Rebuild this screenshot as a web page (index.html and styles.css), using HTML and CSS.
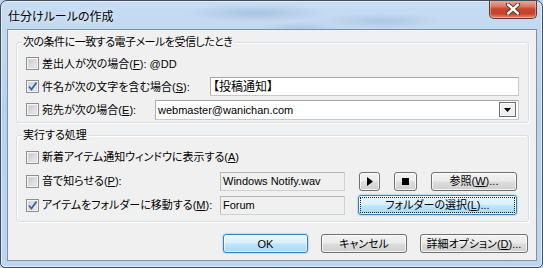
FILE: index.html
```html
<!DOCTYPE html>
<html lang="ja">
<head>
<meta charset="utf-8">
<title>仕分けルールの作成</title>
<link rel="stylesheet" href="styles.css">
</head>
<body>
<div class="window">
  <div class="titlebar">
    <span class="title">仕分けルールの作成</span>
    <div class="close">
      <svg width="16" height="12" viewBox="0 0 16 12">
        <path d="M3 1.5 L13 10.5 M13 1.5 L3 10.5" stroke="#4a2a24" stroke-width="4.2" stroke-linecap="round"/>
        <path d="M3 1.5 L13 10.5 M13 1.5 L3 10.5" stroke="#ffffff" stroke-width="2.4" stroke-linecap="round"/>
      </svg>
    </div>
  </div>
  <div class="client">
    <fieldset class="group g1">
      <legend class="tight">次の条件に一致する電子メールを受信したとき</legend>
      <div class="row">
        <span class="cb"></span>
        <span class="lbl">差出人が次の場合(<u>F</u>): @DD</span>
      </div>
      <div class="row">
        <span class="cb checked"><svg width="11" height="11" viewBox="0 0 11 11"><path d="M2 5.5 L4.5 8.5 L9.5 1.5" fill="none" stroke="#3a62a8" stroke-width="1.9"/></svg></span>
        <span class="lbl w-subject">件名が次の文字を含む場合(<u>S</u>):</span>
        <div class="field grow">【投稿通知】</div>
      </div>
      <div class="row">
        <span class="cb"></span>
        <span class="lbl w-to">宛先が次の場合(<u>E</u>):</span>
        <div class="field grow combo">
          <span>webmaster@wanichan.com</span>
          <span class="dd"><svg width="7" height="4" viewBox="0 0 7 4"><path d="M0 0 H7 L3.5 4 Z" fill="#000"/></svg></span>
        </div>
      </div>
    </fieldset>
    <fieldset class="group g2">
      <legend>実行する処理</legend>
      <div class="row">
        <span class="cb"></span>
        <span class="lbl">新着アイテム通知ウィンドウに表示する(<u>A</u>)</span>
      </div>
      <div class="row">
        <span class="cb"></span>
        <span class="lbl w-act">音で知らせる(<u>P</u>):</span>
        <div class="field short ro">Windows Notify.wav</div>
        <button class="btn play"><svg width="6" height="9" viewBox="0 0 6 9"><path d="M0 0 L6 4.5 L0 9 Z" fill="#000"/></svg></button>
        <button class="btn stop"><svg width="7" height="7" viewBox="0 0 7 7"><rect width="7" height="7" fill="#000"/></svg></button>
        <button class="btn browse">参照(<u>W</u>)...</button>
      </div>
      <div class="row">
        <span class="cb checked"><svg width="11" height="11" viewBox="0 0 11 11"><path d="M2 5.5 L4.5 8.5 L9.5 1.5" fill="none" stroke="#3a62a8" stroke-width="1.9"/></svg></span>
        <span class="lbl w-act">アイテムをフォルダーに移動する(<u>M</u>):</span>
        <div class="field short ro">Forum</div>
        <button class="btn focus folder"><span class="focusring">フォルダーの選択(<u>L</u>)...</span></button>
      </div>
    </fieldset>
    <div class="actions">
      <button class="btn default ok">OK</button>
      <button class="btn cancel">キャンセル</button>
      <button class="btn detail">詳細オプション(<u>D</u>)...</button>
    </div>
  </div>
</div>
</body>
</html>
```

FILE: styles.css
```css
* { box-sizing: border-box; }

html, body {
  margin: 0;
  padding: 0;
  width: 543px;
  height: 268px;
  overflow: hidden;
  background: #bcd3ec;
}

body {
  font-family: "Liberation Sans", "Noto Sans CJK JP", sans-serif;
  font-size: 11px;
  line-height: 14px;
  color: #000;
  font-feature-settings: "palt";
}

.window {
  width: 543px;
  height: 268px;
  display: flex;
  flex-direction: column;
  border: 1px solid #3e4d5f;
  border-radius: 7px 7px 5px 5px;
  box-shadow: inset 0 0 0 1px rgba(255, 255, 255, 0.55);
  background:
    radial-gradient(ellipse 70px 9px at 255px 12px, rgba(120, 150, 190, 0.35), transparent),
    radial-gradient(ellipse 60px 8px at 380px 20px, rgba(120, 150, 190, 0.28), transparent),
    radial-gradient(ellipse 40px 6px at 300px 27px, rgba(120, 150, 190, 0.25), transparent),
    linear-gradient(180deg, #c5dcf2 0%, #b9d2ec 40%, #bdd5ee 100%);
  overflow: hidden;
}

.titlebar {
  height: 28px;
  display: flex;
  justify-content: space-between;
  align-items: flex-start;
  padding-left: 7px;
}

.title {
  padding-top: 8px;
  font-family: "Noto Sans CJK JP", sans-serif;
  font-size: 12px;
  line-height: 14px;
  color: #000;
  text-shadow: 0 0 6px rgba(255, 255, 255, 0.9);
}

.close {
  width: 48px;
  height: 19px;
  margin-right: 5px;
  margin-top: -1px;
  border: 1px solid #6b3428;
  border-top: none;
  border-radius: 0 0 5px 5px;
  background: linear-gradient(180deg, #eab1a3 0%, #d97a64 35%, #c8452c 50%, #c44329 75%, #dc8c70 100%);
  box-shadow: inset 0 0 0 1px rgba(255, 220, 210, 0.45);
  display: flex;
  align-items: center;
  justify-content: center;
}

.client {
  flex: 1;
  margin: 0 5px 6px 6px;
  border: 1px solid #7f91a6;
  background: #f0f0f0;
  padding: 0 7px 0 8px;
  display: flex;
  flex-direction: column;
}

.group {
  margin: 5px 0 0 0;
  padding: 3px 9px 1px 5px;
  border: 1px solid #d5dfe5;
  border-radius: 3px;
  box-shadow: inset 1px 1px 0 #fff, 1px 1px 0 #fff;
  min-width: 0;
}

.group legend {
  padding: 0 1px;
  line-height: 14px;
  font-size: 11px;
}

.group legend.tight { letter-spacing: -0.5px; }

.g2 { padding-bottom: 4px; }

.row {
  display: flex;
  align-items: center;
  height: 23px;
  padding-left: 4px;
}

.g2 .row { height: 24px; }

.cb {
  width: 13px;
  height: 13px;
  flex: none;
  margin-right: 3px;
  border: 1px solid #8f8f8f;
  background: linear-gradient(135deg, #b9bdc3 0%, #dcdee1 55%, #f1f1f2 100%);
  box-shadow: inset 0 0 0 1px #f5f5f5, inset 0 0 0 2px #d9dbde;
  display: flex;
  align-items: center;
  justify-content: center;
}

.cb.checked {
  background: linear-gradient(135deg, #c4c8cd 0%, #e4e6e8 55%, #f5f5f6 100%);
}

.lbl { white-space: nowrap; flex: none; }
.w-subject { width: 168px; }
.w-to { width: 113px; }
.w-act { width: 178px; }

u { text-decoration: underline; text-underline-offset: 1px; }

.field {
  height: 19px;
  border: 1px solid #abadb3;
  border-color: #a6a6a6 #c8c8c8 #c8c8c8 #b0b0b0;
  background: #fff;
  padding: 0 2px;
  display: flex;
  align-items: center;
  white-space: nowrap;
  font-size: 12px;
}

.grow { flex: 1; }

.combo {
  justify-content: space-between;
  padding-right: 2px;
  height: 20px;
  font-size: 11px;
}

.dd {
  width: 17px;
  height: 15px;
  border: 1px solid #6e6e6e;
  background: #f0f0f0;
  box-shadow: inset 1px 1px 0 #fff;
  display: flex;
  align-items: center;
  justify-content: center;
}

.short { width: 125px; flex: none; font-size: 11px; }
.ro { background: #f0f0f0; border-color: #b5b5b5 #d0d0d0 #d0d0d0 #bcbcbc; }

.btn {
  height: 19px;
  padding: 0;
  margin: 0;
  border: 1px solid #707070;
  border-radius: 3px;
  background: linear-gradient(180deg, #f2f2f2 0%, #ebebeb 48%, #dddddd 52%, #cfcfcf 100%);
  box-shadow: inset 0 0 0 1px rgba(255, 255, 255, 0.75);
  font: inherit;
  font-feature-settings: "palt";
  color: #000;
  display: flex;
  align-items: center;
  justify-content: center;
  white-space: nowrap;
  flex: none;
}

.play { width: 21px; margin-left: 14px; }
.stop { width: 23px; margin-left: 14px; }
.browse { width: 86px; margin-left: 14px; }
.folder { width: 159px; margin-left: 13px; height: 20px; }

.default, .focus {
  border-color: #3c7fb1;
  background: linear-gradient(180deg, #eaf6fd 0%, #d9f0fc 48%, #bee6fd 52%, #a7d9f5 100%);
  box-shadow: inset 0 0 0 1px rgba(255, 255, 255, 0.6), 0 0 1px 1px rgba(100, 190, 240, 0.35);
}

.focusring {
  display: flex;
  align-items: center;
  justify-content: center;
  width: calc(100% - 4px);
  height: calc(100% - 4px);
  outline: 1px dotted #222;
}

.actions {
  display: flex;
  justify-content: flex-end;
  gap: 13px;
  margin-top: 12px;
  margin-right: 1px;
}

.ok { width: 85px; }
.cancel { width: 86px; }
.detail { width: 108px; }
```
